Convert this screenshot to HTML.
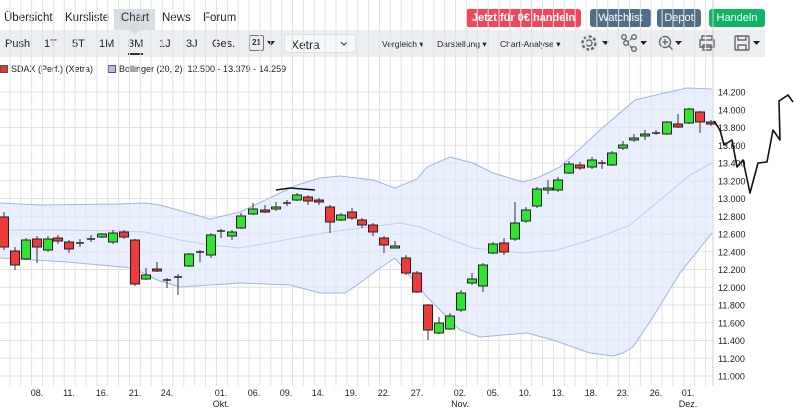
<!DOCTYPE html>
<html><head><meta charset="utf-8"><style>
*{margin:0;padding:0;box-sizing:border-box}
body{width:795px;height:413px;overflow:hidden;background:#fff;font-family:"Liberation Sans",sans-serif;position:relative}
.a{position:absolute;white-space:nowrap}
.tab{font-size:11.5px;color:#222;top:12px}
.btn{top:9px;height:18px;border-radius:3px;color:#fff;font-size:11px;text-align:center;line-height:18px}
.tb{font-size:11px;color:#222;top:38px}
.sm{font-size:8.5px;color:#222;top:39px}
</style></head><body>
<div class="a" style="left:114px;top:9px;width:41px;height:21px;background:#d5dce2"></div>
<div class="a tab" style="left:4px">Übersicht</div>
<div class="a tab" style="left:65px">Kursliste</div>
<div class="a tab" style="left:121px;color:#333">Chart</div>
<div class="a tab" style="left:162px">News</div>
<div class="a tab" style="left:203px">Forum</div>
<div class="a btn" style="left:466px;width:115px;background:#f0475d;font-weight:bold">Jetzt für 0€ handeln</div>
<div class="a btn" style="left:590px;width:61px;background:#4e6f87">Watchlist</div>
<div class="a btn" style="left:657px;width:44px;background:#4e6f87">Depot</div>
<div class="a btn" style="left:709px;width:56px;background:#10b465">Handeln</div>
<div class="a" style="left:0;top:30px;width:765px;height:27px;background:#eceff2"></div>
<div class="a" style="left:130px;top:30px;width:0;height:0;border-left:5px solid transparent;border-right:5px solid transparent;border-top:5px solid #d5dce2"></div>
<div class="a tb" style="left:5px">Push</div>
<div class="a tb" style="left:44px">1T</div>
<div class="a tb" style="left:72px">5T</div>
<div class="a tb" style="left:99px">1M</div>
<div class="a tb" style="left:128px">3M</div>
<div class="a" style="left:128px;top:53px;width:15px;height:2px;background:#333"></div>
<div class="a tb" style="left:159px">1J</div>
<div class="a tb" style="left:186px">3J</div>
<div class="a tb" style="left:212px">Ges.</div>
<div class="a" style="left:249px;top:35px;width:15px;height:16px;border:1px solid #777;border-radius:2px;font-size:8px;text-align:center;line-height:14px;color:#333;font-weight:bold">21</div>
<div class="a" style="left:267px;top:41px;border-left:4px solid transparent;border-right:4px solid transparent;border-top:5px solid #222"></div>
<div class="a" style="left:284px;top:34px;width:72px;height:19px;background:#f7f8f9;border:1px solid #dcdfe3;border-radius:3px;font-size:12px;padding:3px 0 0 6px;color:#222">Xetra</div>
<svg class="a" style="left:340px;top:41px" width="8" height="5"><path d="M1 1l3 3 3-3" fill="none" stroke="#444" stroke-width="1.2"/></svg>
<div class="a sm" style="left:382px">Vergleich ▾</div>
<div class="a sm" style="left:437px">Darstellung ▾</div>
<div class="a sm" style="left:500px">Chart-Analyse ▾</div>
<svg class="a" style="left:578px;top:32px" width="185" height="22" viewBox="0 0 185 22">
<g fill="none" stroke="#666" stroke-width="1.4">
<circle cx="11" cy="11" r="3"/><circle cx="11" cy="11" r="6.5" stroke-dasharray="3 2" stroke-width="2.5"/>
<circle cx="46" cy="5" r="2.3"/><circle cx="56" cy="5" r="2.3"/><circle cx="48" cy="11" r="2.3"/><circle cx="56" cy="17" r="2.3"/><path d="M47 7l1 2M50 12l4 4M54 6l-4 4"/>
<circle cx="87" cy="10" r="5.5"/><path d="M84 10h6M87 7v6M91 14l4 4"/>
<path d="M124 8v-4h10v4M122 8h14v7h-14zM125 13h8v5h-8z"/>
<rect x="157" y="4" width="14" height="14" rx="1"/><path d="M160 4v4h8v-4M160 18v-5h8v5"/>
</g>
<g fill="#222"><path d="M24 9h7l-3.5 4z"/><path d="M62 9h7l-3.5 4z"/><path d="M97 9h7l-3.5 4z"/><path d="M175 9h7l-3.5 4z"/></g>
</svg>
<div class="a" style="left:0;top:65px;width:8px;height:8px;background:#e33;border:1px solid #555"></div>
<div class="a" style="left:11px;top:64px;font-size:9px;color:#222">SDAX (Perf.) (Xetra)</div>
<div class="a" style="left:108px;top:65px;width:8px;height:8px;background:#aac0e8;border:1px solid #555"></div>
<div class="a" style="left:119px;top:64px;font-size:9px;color:#222">Bollinger (20, 2): 12.500 - 13.379 - 14.259</div>
<svg id="c" class="a" style="left:0;top:0" width="795" height="413"></svg>
<script>
var s='';
var top=78,bot=386,R=713;
for(var i=0;i<66;i++){var x=4.5+i*10.87+5.4;if(x<R)s+='<line x1="'+x+'" y1="'+top+'" x2="'+x+'" y2="'+bot+'" stroke="#e2e2e2"/>';}
var labs=['14.200','14.000','13.800','13.600','13.400','13.200','13.000','12.800','12.600','12.400','12.200','12.000','11.800','11.600','11.400','11.200','11.000'];
for(var j=0;j<17;j++){var y=92+j*17.75;s+='<line x1="0" y1="'+y+'" x2="'+R+'" y2="'+y+'" stroke="#e2e2e2"/>';s+='<text x="718" y="'+(y+3.5)+'" font-size="9" fill="#222" font-family="Liberation Sans">'+labs[j]+'</text>';}
s+='<line x1="'+R+'" y1="'+top+'" x2="'+R+'" y2="'+bot+'" stroke="#ccc"/>';
var up=[[0,203],[40,205],[120,204],[145,203],[160,205],[210,219],[240,212],[297,185],[320,178],[340,176],[373,180],[395,188],[417,179],[427,167],[450,157],[473,163],[493,173],[523,182],[537,178],[560,167],[600,130],[635,100],[660,94],[687,88],[712,89]];
var lo=[[0,258],[67,262],[133,268],[157,280],[180,287],[240,283],[290,285],[320,293],[345,293],[360,283],[380,268],[395,258],[427,297],[460,330],[480,337],[527,333],[553,340],[590,353],[613,356],[623,353],[633,347],[653,317],[680,273],[712,233]];
var md=[[0,230],[60,230],[120,231],[145,232],[180,240],[210,245],[240,248],[323,233],[400,223],[420,227],[447,238],[473,248],[523,253],[557,250],[600,237],[630,225],[660,200],[690,175],[712,163]];
function pts(a){return a.map(function(p){return p[0]+','+p[1]}).join(' ')}
s+='<polygon points="'+pts(up)+' '+pts(lo.slice().reverse())+'" fill="#dfe8fb" fill-opacity="0.7"/>';
s+='<polyline points="'+pts(up)+'" fill="none" stroke="#9fb5e0" stroke-width="1"/>';
s+='<polyline points="'+pts(lo)+'" fill="none" stroke="#9fb5e0" stroke-width="1"/>';
s+='<polyline points="'+pts(md)+'" fill="none" stroke="#bcd0f2" stroke-width="1"/>';
var C=[[4,217,247,'r',212,250],[15,251,265,'r',247,270],[26,240,259,'g',238,260],[37,239,247,'r',236,263],[48,239,250,'g',236,252],[58,238,241,'r',235,244],[69,242,249,'r',240,253],[80,243,243,'x',239,247],[91,239,239,'x',235,242],[102,234,237,'g',233,238],[113,233,242,'g',230,244],[124,232,237,'r',230,239],[135,240,284,'r',239,286],[146,275,279,'g',268,280],[157,269,271,'r',262,272],[167,280,280,'x',278,288],[178,277,277,'x',274,295],[189,254,266,'g',253,267],[200,252,252,'x',250,262],[211,235,255,'g',233,258],[221,231,231,'x',229,238],[232,232,236,'g',230,240],[241,216,228,'g',213,229],[253,209,214,'g',203,215],[265,210,212,'r',205,213],[276,207,209,'g',202,211],[287,203,203,'x',200,206],[297,195,200,'g',193,201],[308,197,201,'r',195,205],[319,200,202,'r',198,205],[330,207,222,'r',205,233],[341,215,220,'g',213,221],[352,212,218,'r',208,220],[362,220,225,'r',218,228],[373,225,232,'r',223,236],[384,238,245,'r',236,253],[395,246,247,'g',241,248],[406,258,273,'r',255,275],[417,273,292,'r',271,293],[428,305,330,'r',304,340],[439,323,333,'g',317,334],[450,316,329,'g',313,330],[461,293,310,'g',290,312],[472,279,283,'g',273,285],[483,265,286,'g',263,292],[493,244,253,'g',242,254],[504,243,252,'r',238,255],[515,223,239,'g',202,241],[526,210,221,'g',207,223],[537,189,206,'g',187,208],[548,188,190,'g',180,194],[558,180,190,'g',177,192],[569,164,173,'g',161,174],[580,165,168,'r',162,170],[592,160,167,'g',157,169],[602,163,163,'x',160,169],[612,153,165,'g',151,166],[623,145,148,'g',141,150],[634,138,140,'g',134,142],[645,134,136,'g',130,140],[656,133,133,'x',130,135],[667,122,134,'g',121,135],[678,124,127,'r',114,128],[689,109,123,'g',108,124],[700,112,122,'r',111,133],[711,122,124,'r',120,126]];
C.forEach(function(c){var x=c[0];s+='<line x1="'+x+'" y1="'+c[4]+'" x2="'+x+'" y2="'+c[5]+'" stroke="#333" stroke-width="1"/>';
if(c[3]=='x'){s+='<line x1="'+(x-4)+'" y1="'+c[1]+'" x2="'+(x+4)+'" y2="'+c[1]+'" stroke="#222" stroke-width="1.5"/>';}
else{var h=Math.max(c[2]-c[1],2);s+='<rect x="'+(x-4.5)+'" y="'+c[1]+'" width="9" height="'+h+'" fill="'+(c[3]=='g'?'#33e333':'#ee3b3b')+'" stroke="#222" stroke-width="1"/>';}});
var dl=[['08.',37],['11.',69],['16.',102],['21.',135],['24.',167],['01.',221],['06.',254],['09.',286],['14.',318],['19.',351],['22.',384],['27.',417],['02.',460],['05.',493],['10.',525],['13.',558],['18.',591],['23.',623],['26.',656],['01.',688]];
dl.forEach(function(d){s+='<text x="'+d[1]+'" y="396" font-size="9" fill="#222" text-anchor="middle" font-family="Liberation Sans">'+d[0]+'</text>';});
[['Okt.',221],['Nov.',460],['Dez.',688]].forEach(function(d){s+='<text x="'+d[1]+'" y="407" font-size="9" fill="#222" text-anchor="middle" font-family="Liberation Sans">'+d[0]+'</text>';});
s+='<path d="M276 190L290 188L315 190" fill="none" stroke="#111" stroke-width="1.6"/>';
s+='<path d="M714 121L720 130L724 145L732 140L737 167L743 160L750 193L758 163L767 162L773 130L780 140L779 101L788 95L793 102" fill="none" stroke="#111" stroke-width="1.6" stroke-linejoin="round"/>';
document.getElementById('c').innerHTML=s;
</script>
</body></html>
